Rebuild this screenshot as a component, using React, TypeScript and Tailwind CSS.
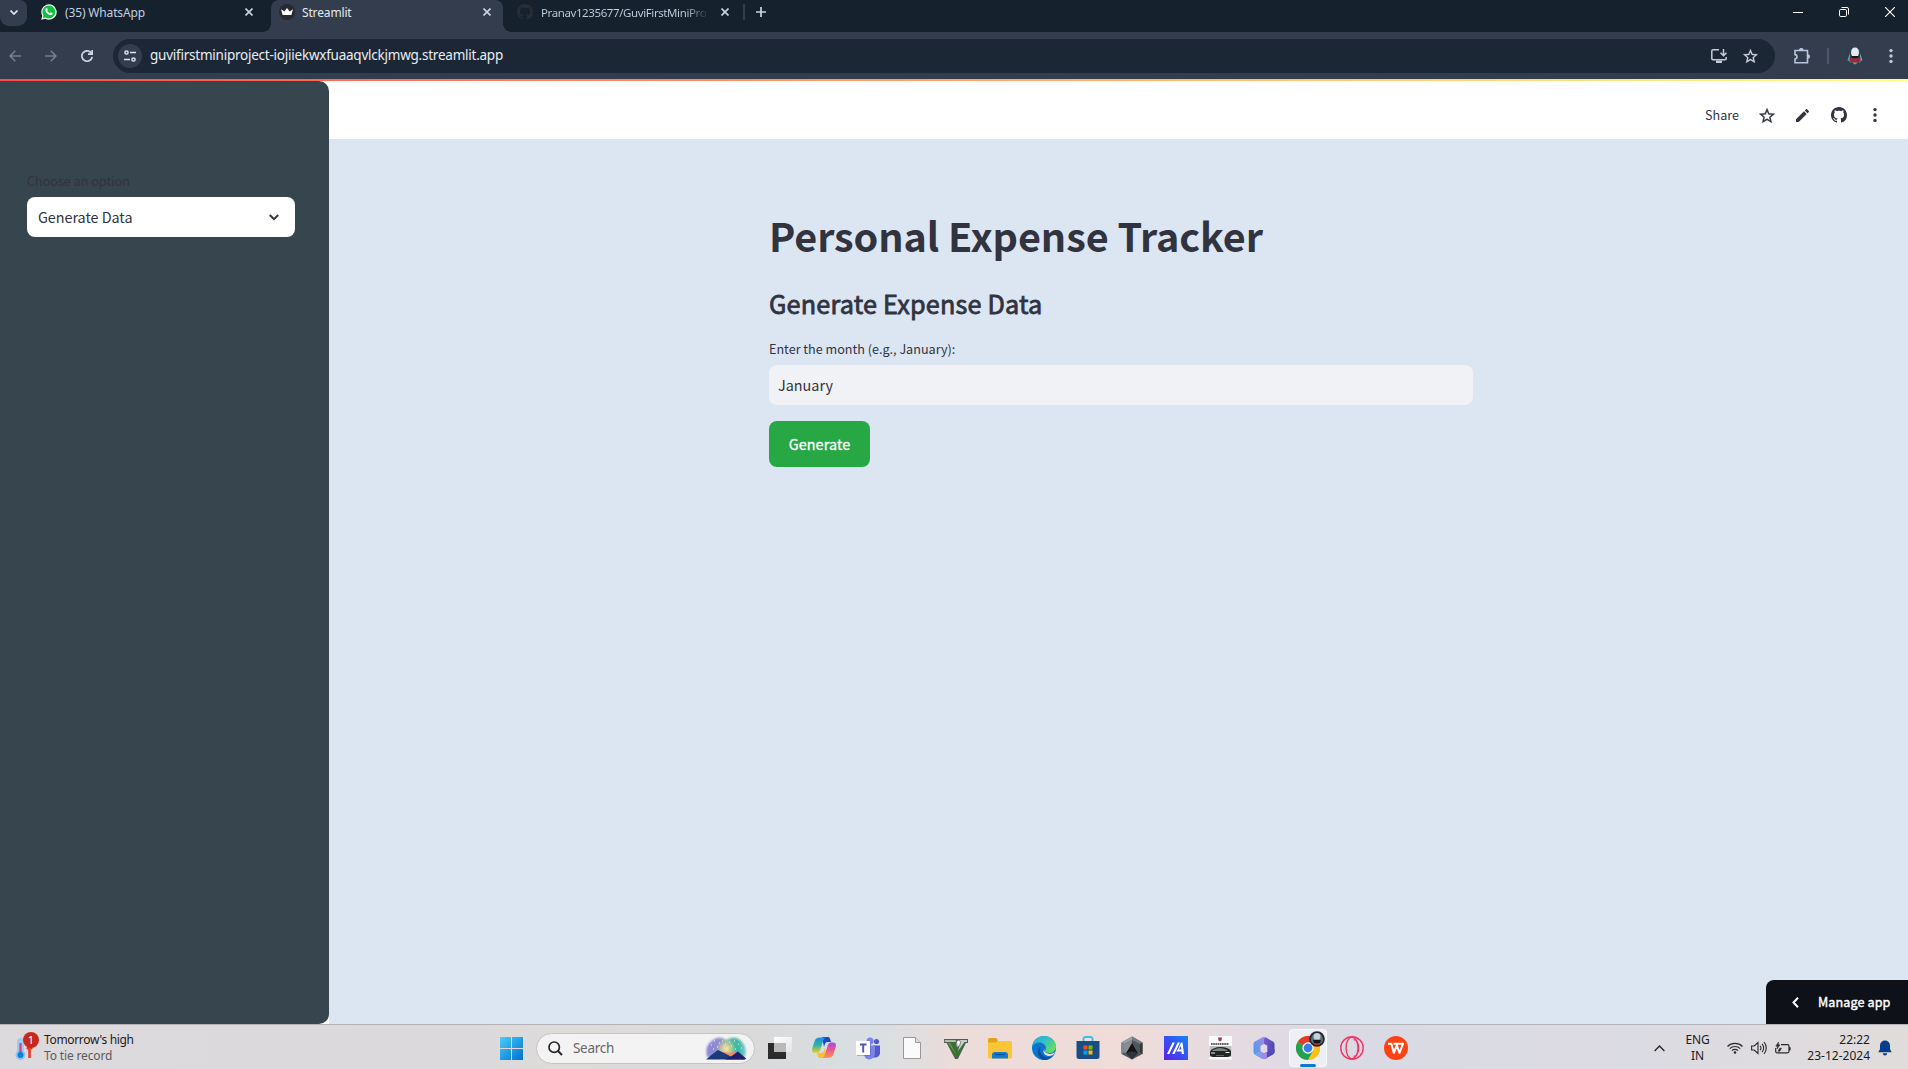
import type { ReactNode } from "react";

const UI = "font-['Noto_Sans',sans-serif]";
const SOURCE = "font-['Noto_Sans_CJK_SC',sans-serif]";

const GITHUB =
  "M8 0C3.58 0 0 3.58 0 8c0 3.54 2.29 6.53 5.47 7.59.4.07.55-.17.55-.38 0-.19-.01-.82-.01-1.49-2.01.37-2.53-.49-2.69-.94-.09-.23-.48-.94-.82-1.13-.28-.15-.68-.52-.01-.53.63-.01 1.08.58 1.23.82.72 1.21 1.87.87 2.33.66.07-.52.28-.87.51-1.07-1.78-.2-3.64-.89-3.64-3.95 0-.87.31-1.59.82-2.15-.08-.2-.36-1.02.08-2.12 0 0 .67-.21 2.2.82.64-.18 1.32-.27 2-.27s1.36.09 2 .27c1.53-1.04 2.2-.82 2.2-.82.44 1.1.16 1.92.08 2.12.51.56.82 1.27.82 2.15 0 3.07-1.87 3.75-3.65 3.95.29.25.54.73.54 1.48 0 1.07-.01 1.93-.01 2.2 0 .21.15.46.55.38A8.01 8.01 0 0 0 16 8c0-4.42-3.58-8-8-8z";
const STAR =
  "M22 9.24l-7.19-.62L12 2 9.19 8.63 2 9.24l5.46 4.73L5.82 21 12 17.27 18.18 21l-1.63-7.03L22 9.24zM12 15.4l-3.76 2.27 1-4.28-3.32-2.88 4.38-.38L12 6.1l1.71 4.04 4.38.38-3.32 2.88 1 4.28L12 15.4z";

function CloseX() {
  return (
    <svg viewBox="0 0 8 8" className="size-2 shrink-0" stroke="#ccd4e0" strokeWidth="1.6">
      <path d="M.5.5l7 7M7.5.5l-7 7" />
    </svg>
  );
}

function Dots({ color }: { color: string }) {
  return (
    <svg viewBox="0 0 4 16" className="h-4 w-1" fill={color}>
      <circle cx="2" cy="2.6" r="1.7" />
      <circle cx="2" cy="8" r="1.7" />
      <circle cx="2" cy="13.4" r="1.7" />
    </svg>
  );
}

function TabStrip() {
  return (
    <div className={`flex h-8 bg-[#16212e] text-[12px] leading-4 text-[#c3cfe0] ${UI}`}>
      <div className="flex h-[26px] w-[27px] items-center justify-center rounded-b-[9px] rounded-tr-[7px] bg-[#333d4d] pb-0.5">
        <svg viewBox="0 0 8 5" className="h-[5px] w-2" fill="none" stroke="#dfe5ee" strokeWidth="1.7">
          <path d="M.5.5L4 4 7.5.5" />
        </svg>
      </div>
      <div className="flex h-6 w-[244px] items-center pl-[14px]">
        <svg viewBox="0 0 16 16" className="size-4 shrink-0">
          <path d="M.2 15.8l1.1-4A7.7 7.7 0 1 1 8 15.7c-1.3 0-2.6-.3-3.7-.9z" fill="#f4fff6" />
          <path d="M1.8 14.2l.7-2.6A6.5 6.5 0 1 1 8 14.5c-1.3 0-2.5-.4-3.5-1z" fill="#12c143" />
          <path d="M5.2 4.3c.4-.4.8-.3 1 .1l.6 1.3c.1.3-.1.6-.6 1.1.8 1.3 1.5 1.9 2.7 2.4.6-.6.8-1 1.2-.8l1.3.7c.4.2.3.8-.1 1.3-1.1 1.1-2.5.7-4-.2C5.8 9.2 4.6 7.6 4.400 6.400c-.2-1 .2-1.700.8-2.100z" fill="#fff" />
        </svg>
        <span className="mt-0.5 ml-2 w-[180px] tracking-[-0.15px]">(35) WhatsApp</span>
        <CloseX />
      </div>
      <div className="relative flex h-8 w-[232px] rounded-t-[8px] bg-[#333d4d]">
        <span className="absolute bottom-0 -left-2 size-2 bg-[radial-gradient(circle_at_0_0,#16212e_7.5px,#333d4d_8px)]" />
        <span className="absolute -right-2 bottom-0 size-2 bg-[radial-gradient(circle_at_100%_0,#16212e_7.5px,#333d4d_8px)]" />
        <div className="flex h-6 items-center pl-2 text-[#e4e9f1]">
          <svg viewBox="0 0 16 16" className="size-4">
            <circle cx="8" cy="8" r="8" fill="#282933" />
            <path d="M2 5.300l3.300 2.300L8 4l2.700 3.600L14 5.300 12.400 11H3.600z" fill="#fff" />
          </svg>
          <span className="mt-0.5 ml-[7px] w-[181px] tracking-[-0.15px]">Streamlit</span>
          <CloseX />
        </div>
      </div>
      <div className="flex h-6 items-center pl-[14px]">
        <svg viewBox="0 0 16 16" className="size-4" fill="#292d36">
          <path d={GITHUB} />
        </svg>
        <span className="mt-0.5 ml-2 w-[172px] bg-[linear-gradient(90deg,#c3cfe0_145px,transparent_168px)] bg-clip-text text-[11.5px] whitespace-nowrap tracking-[-0.4px] text-transparent">
          Pranav1235677/GuviFirstMiniPro
        </span>
        <span className="ml-2 flex">
          <CloseX />
        </span>
        <span className="ml-[14px] h-4 w-0.5 bg-[#333d4d]" />
        <svg viewBox="0 0 10 10" className="ml-[11px] size-[10px]" stroke="#ccd4e0" strokeWidth="1.7">
          <path d="M5 0v10M0 5h10" />
        </svg>
      </div>
      <div className="ml-auto flex h-6 items-center pr-[13px]">
        <span className="mr-9 h-px w-[10px] bg-white" />
        <svg viewBox="0 0 10 10" className="mr-9 size-[10px]" fill="none" stroke="#fff">
          <rect x=".5" y="2.500" width="7" height="7" rx="1.300" />
          <path d="M2.500.5H8A1.500 1.500 0 0 1 9.500 2v5.500" />
        </svg>
        <svg viewBox="0 0 10 10" className="size-[10px]" stroke="#fff" strokeWidth="1.100">
          <path d="M0 0l10 10M10 0L0 10" />
        </svg>
      </div>
    </div>
  );
}

function Toolbar() {
  return (
    <div className={`flex h-[47px] items-center bg-[#333d4d] pl-[9px] ${UI}`}>
      <svg viewBox="0 0 12 12" className="size-3" fill="none" stroke="#757d89" strokeWidth="1.600">
        <path d="M12 6H1.200M6.300.8L1.100 6l5.200 5.200" />
      </svg>
      <svg viewBox="0 0 12 12" className="ml-6 size-3" fill="none" stroke="#757d89" strokeWidth="1.600">
        <path d="M0 6h10.800M5.700.8L10.900 6l-5.200 5.200" />
      </svg>
      <svg viewBox="0 0 12 12" className="ml-6 size-3" fill="none" stroke="#ccd6e4" strokeWidth="1.700">
        <path d="M10.300 3A5.200 5.200 0 1 0 11.200 6.800M11.200 0v4.200H7" />
      </svg>
      <div className="ml-5 flex h-[34px] w-[1662px] items-center rounded-full bg-[#1c2736] pr-[17px] pl-[5px]">
        <span className="flex size-6 items-center justify-center rounded-full bg-[#333d4d]">
          <svg viewBox="0 0 12 12" className="size-3" fill="none" stroke="#dde3ec" strokeWidth="1.500">
            <circle cx="2.500" cy="2.500" r="1.600" />
            <circle cx="9.500" cy="9.500" r="1.600" />
            <path d="M6 2.500h6M0 9.500h6" />
          </svg>
        </span>
        <span className="ml-2 text-[13.5px] tracking-[-0.235px] text-[#e8edf5]">
          guvifirstminiproject-iojiiekwxfuaaqvlckjmwg.streamlit.app
        </span>
        <svg viewBox="0 0 16 16" className="ml-auto size-4" fill="none" stroke="#c5ccd6" strokeWidth="1.500">
          <path d="M8 1.700H2Q.8 1.700.8 3v7.500q0 1.200 1.200 1.200h12q1.200 0 1.200-1.200V9M12.500 1v6.500M9.500 4.800l3 3 3-3" />
          <path d="M5 13.800h6" strokeWidth="2.400" />
        </svg>
        <svg viewBox="2 2 20 19" className="ml-4 h-[14px] w-[15px]" fill="#ccd3dd" stroke="#ccd3dd" strokeWidth=".3">
          <path d={STAR} />
        </svg>
      </div>
      <svg viewBox="0 0 16 16" className="ml-[19px] size-4" fill="none" stroke="#b7c6dc" strokeWidth="1.600">
        <path d="M1 2.500h12.500V14.800H1V11c2.600-.2 2.600-4.200 0-4.400z" />
        <path d="M5.500 2a1.800 1.800 0 0 1 3.600 0zM14 6.800a1.700 1.700 0 0 1 0 3.400z" fill="#b7c6dc" strokeWidth="1" />
      </svg>
      <span className="ml-[17px] h-4 w-0.5 bg-[#4b586b]" />
      <svg viewBox="0 0 20 20" className="ml-4 size-5">
        <circle cx="10" cy="10" r="9" fill="#343b48" />
        <path d="M4 9q0-7 6-7t6 7l2 6-5 4H7l-5-4z" fill="#234753" />
        <path d="M5 7l-2.500 7L6 17l-1-5zM15 7l2.500 7L14 17l1-5z" fill="#58a9b6" />
        <path d="M6 7q0-5.500 4-5.500T14 7l-1 3H7z" fill="#e4eaf2" />
        <path d="M4.500 11.500l3 1h5l3-1v4l-3 1h-5l-3-1z" fill="#b3202f" />
        <path d="M6 10h8l-1.500 2h-5z" fill="#14171d" />
        <path d="M7 16.500h6l-3 2z" fill="#8e979f" />
      </svg>
      <span className="ml-6">
        <Dots color="#bfcadb" />
      </span>
    </div>
  );
}

function AppHeader() {
  return (
    <header className={`flex h-[58px] items-center justify-end bg-white pt-[10px] pr-[31px] ${SOURCE}`}>
      <span className="mr-5 text-[12.6px] text-[#31333f]">Share</span>
      <svg viewBox="2 2 20 19" className="mr-[21px] h-[15px] w-4" fill="#31333f" stroke="#31333f" strokeWidth=".3">
        <path d={STAR} />
      </svg>
      <svg viewBox="3 3 18 18" className="mr-[22px] size-[13px]" fill="#31333f">
        <path d="M3 17.250V21h3.750L17.810 9.940l-3.750-3.750L3 17.250zM20.710 7.040a1 1 0 0 0 0-1.410l-2.340-2.340a1 1 0 0 0-1.410 0l-1.830 1.830 3.750 3.750 1.830-1.830z" />
      </svg>
      <svg viewBox="0 0 16 16" className="mr-[26px] size-4" fill="#31333f">
        <path d={GITHUB} />
      </svg>
      <Dots color="#31333f" />
    </header>
  );
}

function Page() {
  return (
    <div className={`flex h-[943px] bg-white text-[#31333f] ${SOURCE}`}>
      <aside className="w-[329px] rounded-r-[10px] bg-[#37454f] pt-[91px] pl-[27px]">
        <p className="h-[25px] text-[12.6px] leading-[18px]">Choose an option</p>
        <div className="flex h-10 w-[268px] items-center justify-between rounded-lg bg-white pr-4 pl-[11px] text-[14.4px] tracking-[-0.05px]">
          Generate Data
          <svg viewBox="0 0 10 7" className="h-[7px] w-[10px]" fill="none" stroke="#31333f" strokeWidth="2">
            <path d="M.8 1L5 5.200 9.200 1" />
          </svg>
        </div>
      </aside>
      <div className="flex flex-1 flex-col">
        <AppHeader />
        <main className="flex flex-1 flex-col bg-[#dce6f2]">
          <div className="ml-[440px] w-[704px] pt-[69px]">
            <h1 className="h-[72px] text-[39.6px] leading-[53px] font-bold tracking-[-0.1px] whitespace-nowrap">
              Personal Expense Tracker
            </h1>
            <h2 className="h-[59px] text-[25.2px] leading-[46px] tracking-[0.2px] [-webkit-text-stroke:0.8px_#31333f]">
              Generate Expense Data
            </h2>
            <p className="h-[26px] text-[12.6px] leading-5">Enter the month (e.g., January):</p>
            <div className="flex h-10 items-center rounded-lg bg-[#f0f2f6] pl-[9px] text-[14.4px]">January</div>
            <button className="mt-4 h-[46px] w-[101px] rounded-lg bg-[#28a745] text-[14.4px] tracking-[0.1px] text-white [-webkit-text-stroke:0.3px_white]">
              Generate
            </button>
          </div>
          <div className="mt-auto ml-auto flex h-11 w-[142px] items-center rounded-tl-lg bg-[#0e1117] pl-[26px] text-[12.6px] tracking-[0.1px] text-white [-webkit-text-stroke:0.4px_white]">
            <svg viewBox="0 0 7 11" className="mr-[19px] h-[11px] w-[7px]" fill="none" stroke="#fff" strokeWidth="2">
              <path d="M6 .8L1.500 5.500 6 10.200" />
            </svg>
            Manage app
          </div>
        </main>
      </div>
    </div>
  );
}

function Slot({ children }: { children: ReactNode }) {
  return (
    <div className="flex w-11 justify-center">
      <svg viewBox="0 0 24 24" className="size-6">
        {children}
      </svg>
    </div>
  );
}

function TaskIcons() {
  return (
    <>
      <Slot>
        <defs>
          <linearGradient id="cpA" x1="0" y1="0" x2="0" y2="1">
            <stop offset="0" stopColor="#1d8bea" />
            <stop offset=".5" stopColor="#2fb6a0" />
            <stop offset="1" stopColor="#efcf2c" />
          </linearGradient>
          <linearGradient id="cpB" x1="0" y1="0" x2="0" y2="1">
            <stop offset="0" stopColor="#a14fe0" />
            <stop offset=".5" stopColor="#f0588c" />
            <stop offset="1" stopColor="#fb9a4b" />
          </linearGradient>
          <linearGradient id="tv" x1="0" y1="0" x2="1" y2="1">
            <stop offset="0" stopColor="#fff" />
            <stop offset="1" stopColor="#e4e4e4" />
          </linearGradient>
          <linearGradient id="edge" x1="0" y1="0" x2="1" y2=".6">
            <stop offset="0" stopColor="#27a9e0" />
            <stop offset=".55" stopColor="#35c1c4" />
            <stop offset="1" stopColor="#69dc5b" />
          </linearGradient>
          <linearGradient id="asus" x1="0" y1="1" x2="1" y2="0">
            <stop offset="0" stopColor="#5a20e8" />
            <stop offset="1" stopColor="#1583f8" />
          </linearGradient>
          <linearGradient id="mA" x1="0" y1="1" x2="1" y2="0">
            <stop offset="0" stopColor="#4a9be8" />
            <stop offset="1" stopColor="#a98ae8" />
          </linearGradient>
          <linearGradient id="mB" x1="0" y1="0" x2="1" y2="1">
            <stop offset="0" stopColor="#7f5fd0" />
            <stop offset="1" stopColor="#3c3fae" />
          </linearGradient>
          <linearGradient id="mC" x1="0" y1="0" x2="1" y2="0">
            <stop offset="0" stopColor="#5fb4f0" />
            <stop offset="1" stopColor="#b07fe6" />
          </linearGradient>
        </defs>
        <path d="M0 7h18v16H0z" fill="#2c2c2c" />
        <path d="M6 1h18v15H6z" fill="url(#tv)" />
        <path d="M6 7h12v9H6z" fill="#b9b9b9" />
      </Slot>
      <Slot>
        <path d="M10 1h6c2 0 2 2 3 5h-3c-3 0-3 2-4 5z" fill="#1f45cf" />
        <path d="M14 22H8c-2 0-2-2-3-5h4c3 0 3-3 4-5z" fill="#f6c231" />
        <path d="M8 1.500h6c-3 1-3 5-5 10-1 4-2 5.500-4 5.500H3c-3 0-3.500-2-2.500-5.500l2-6C3.500 2.500 5 1.500 8 1.500z" fill="url(#cpA)" />
        <path d="M16 22h-6c3-1 3-5 5-10 1-4 2-5.500 4-5.500h2c3 0 3.500 2 2.500 5.500l-2 6c-1 3-2.500 4-5.500 4z" fill="url(#cpB)" />
      </Slot>
      <Slot>
        <circle cx="14" cy="5" r="3.500" fill="#7b83eb" />
        <circle cx="20.500" cy="5.500" r="2.600" fill="#5059c9" />
        <path d="M17 9.500h7v8q-1 4-5 4h-2z" fill="#5059c9" />
        <path d="M8 9.500h11v7c0 9-11 9-11 1z" fill="#7b83eb" />
        <path d="M0 5h14v14H0z" fill="#fff" />
        <path d="M4 8.500h6.500M7.200 8.500v8" stroke="#4b53bc" strokeWidth="1.900" />
        <path d="M14 6v13H1v1h14V6z" fill="#4a50aa" opacity=".35" />
      </Slot>
      <Slot>
        <path d="M3.500 1.500h12l5 5v16h-17z" fill="#fafafa" stroke="#989898" />
        <path d="M15.500 1.500v5h5" fill="#ddd" stroke="#989898" />
      </Slot>
      <Slot>
        <path d="M.5 3.500h12v3h-1.500l2 7 3-7H14l-.5-3h10v3h-2L13.500 22.500h-2L3 6.500H.5z" fill="#34772c" stroke="#555b55" strokeWidth="1.200" />
        <path d="M.8 4h11v2h-11z" fill="#b5bab2" />
        <path d="M4 7h2l6.500 12z" fill="#6c9a58" />
        <path d="M14 4h9v2h-2.500L14 15l2-7.500z" fill="#c9ccc6" />
        <path d="M12.500 6.500c0-3 4-3 4 0s-3 4-3 6z" fill="#fff" stroke="#555" strokeWidth=".7" />
      </Slot>
      <Slot>
        <path d="M0 4q0-2 2-2h6l2 3h12q2 0 2 2v14q0 1.500-1.500 1.500h-21Q0 22.500 0 21z" fill="#fcc535" />
        <path d="M0 4q0-2 2-2h6l2 2-2 2.500H0z" fill="#e3a018" />
        <path d="M4 22.500V19q0-3 3-3h10q3 0 3 3v3.500z" fill="#147bd1" />
        <path d="M7 18.500h10" stroke="#0c56a0" strokeWidth="1.500" />
      </Slot>
      <Slot>
        <circle cx="12" cy="12" r="12" fill="#0c74ce" />
        <path d="M0 11C1 4 6 0 12 0c7 0 12 5 12 10.500 0 4-3 6.500-6.500 6.500-3 0-4.500-1-4.500-2 0-.8 1-1.200 1-3C14 9 11 6.500 7.500 6.500 4 6.500 1 8.500 0 11z" fill="url(#edge)" />
        <path d="M9 10c-3 6 2 11.500 7 11.500 2.500 0 4.500-1 6.500-3C20 22 16.500 24 12.500 24 6 24 3.500 13 9 10z" fill="#0f4f9c" />
        <path d="M13.500 12c-1.500.5-2 3 0 4.500 2.500 2 6.500 2 9.500-.5-1.500 3-3.500 4-6 4-5 0-7.500-5.500-3.500-8z" fill="#e9e3e4" />
      </Slot>
      <Slot>
        <path d="M7.500 6V3q0-2 2-2h5q2 0 2 2v3" fill="none" stroke="#35c0ef" strokeWidth="1.800" />
        <path d="M.5 5h23v15.500q0 2.500-2.500 2.500H3Q.5 23 .5 20.500z" fill="#194d83" />
        <path d="M7.500 9.500h4v4h-4z" fill="#f25022" />
        <path d="M12.500 9.500h4v4h-4z" fill="#7fba00" />
        <path d="M7.500 14.500h4v4h-4z" fill="#00a4ef" />
        <path d="M12.500 14.500h4v4h-4z" fill="#ffb900" />
      </Slot>
      <Slot>
        <path d="M12 .5l10.500 6v11.500L12 23.500 1.500 18V6.500z" fill="#50565c" />
        <path d="M12 .5L1.500 6.500 4 8l8-4z" fill="#9aa1a7" />
        <path d="M12 .5l10.500 6L20 8l-8-4z" fill="#757c83" />
        <path d="M1.500 6.500L4 8v8.500L1.500 18z" fill="#7e858b" />
        <path d="M22.500 6.500L20 8v8.500l2.500 1.500z" fill="#33383d" />
        <path d="M4 8l8-4v4L6 17l-2-.5z" fill="#868d94" />
        <path d="M12 7l6 10.500-6-2-6 2z" fill="#121518" />
        <path d="M6 17.500l6-2 6 2-6 6z" fill="#30353a" />
      </Slot>
      <Slot>
        <path d="M0 0h24v24H0z" fill="url(#asus)" />
        <path d="M3 18L8.500 6.500h2.300L5.300 18zM8.200 18l5.500-11.500H16L10.500 18zM17 6.500h1.500L20 18h-2.200l-.3-2.500h-5l1-2h3.800l-.4-3.500-2 3.500h-1z" fill="#fff" />
      </Slot>
      <Slot>
        <path d="M1 0h23v23.500H1z" fill="#f8f9fa" />
        <path d="M10 1.500h4l-.5 3-1.500 1-1.500-1z" fill="#a5375e" />
        <path d="M3 8h18" stroke="#333" strokeWidth="1.700" strokeDasharray="1.700 .5" />
        <path d="M1.500 10h22v11h-22z" fill="#b9bdbc" />
        <path d="M2 15.500Q5 11 12.500 11T23 15v4.500l-3 1.500H4.500L2 19.500z" fill="#232726" />
        <path d="M6 13.500q6-3 12 0l2 1.500H4z" fill="#7f8684" />
        <path d="M3 17h4M17.500 16.500h4" stroke="#e9eceb" />
        <path d="M8 19.500h8" stroke="#5f6664" />
      </Slot>
      <Slot>
        <path d="M10.500 1.300q1.500-.8 3 0L15 2.200v7L12 7.800 8.500 10v5.500L2.800 18.600Q1.500 17.500 1.500 16V8Q1.500 6.500 3 5.600z" fill="url(#mA)" />
        <path d="M13.500 1.300L21 5.600q1.500 1 1.500 2.400v9L15.500 14V9.800L12 7.800V3z" fill="url(#mB)" />
        <path d="M22.500 13v3q0 1.500-1.500 2.500l-7.500 4.200q-1.500.8-3 0L3 18.500l5.500-3 3.500 2 3.500-2V9.500z" fill="url(#mB)" />
        <path d="M2 17.500l6.500-2 3.500 2 3-1.500v6l-1.500.8q-1.500.8-3 0L3 18.500z" fill="url(#mC)" />
      </Slot>
      <div className="flex w-11 justify-center">
        <div className="relative flex h-[38px] w-[38px] items-center justify-center rounded-[4px] border border-white/60 bg-[#eeeff5]">
          <svg viewBox="0 0 24 24" className="size-6">
            <circle cx="12" cy="12" r="12" fill="#fbc116" />
            <path d="M12 12L1.600 6A12 12 0 0 1 22.400 6z" fill="#e33b2e" />
            <path d="M12 12L1.600 6A12 12 0 0 0 12 24l5.200-9z" fill="#22a150" />
            <path d="M12 6.500h10.700A12 12 0 0 1 12 24l5-9z" fill="#fbc116" />
            <circle cx="12" cy="12" r="5.700" fill="#fff" />
            <circle cx="12" cy="12" r="4.400" fill="#3b7ded" />
          </svg>
          <svg viewBox="0 0 16 16" className="absolute top-[1px] right-[1px] size-4">
            <circle cx="8" cy="8" r="7.800" fill="#20272e" />
            <path d="M2 10q0-8 6-8t6 8l-2 3-2-3H6l-2 3z" fill="#52707f" />
            <path d="M4.500 6q0-4 3.500-4t3.500 4l-1 2.500h-5z" fill="#c9d1d8" />
            <path d="M4 9h8l-1 3H5z" fill="#161418" />
            <path d="M4 11.500l4 1 4-1-1.500 2.500h-5z" fill="#a3343c" />
          </svg>
          <span className="absolute -bottom-px h-[3px] w-4 rounded-full bg-[#0f78d4]" />
        </div>
      </div>
      <Slot>
        <g fill="none" stroke="#f5325f">
          <circle cx="12" cy="12" r="11.200" strokeWidth="1.400" />
          <ellipse cx="12" cy="12" rx="6" ry="10.800" strokeWidth="1.300" />
          <path d="M13.500 3.500c7 1 7 16 0 17" strokeWidth="1.200" />
        </g>
      </Slot>
      <Slot>
        <circle cx="12" cy="12" r="12" fill="#fc4213" />
        <path
          d="M4 7.800h3.300l2.500 9 3-7.500 2.700 7.500 3.500-9H9.500"
          fill="none"
          stroke="#fff"
          strokeWidth="2"
          strokeLinejoin="round"
        />
      </Slot>
    </>
  );
}

function Taskbar() {
  return (
    <div
      className={`flex h-[45px] items-center border-t border-[#b3b3b7] bg-[linear-gradient(90deg,#dcdadc_0px,#dbd9db_480px,#dedbda_560px,#dadadb_760px,#d8dfe3_870px,#ecdcda_960px,#f0dcd9_1120px,#e3dbe2_1250px,#d9dae4_1340px,#dcdbe2_1660px,#e1dcdb_1908px)] pt-[3px] pb-px text-[12px] leading-4 text-[#1c1c1c] ${UI}`}
    >
      <div className="flex w-[500px] items-center pl-[15px]">
        <div className="relative mt-[-4px] h-7 w-[29px]">
          <svg viewBox="0 0 18 24" className="absolute top-1.5 left-0 h-6 w-[18px]">
            <rect x="2" y="0" width="7" height="20" rx="3.500" fill="#9ccbf5" />
            <circle cx="5.500" cy="17" r="5" fill="#8fc4f3" />
            <path d="M5.500 5v12" stroke="#d84a83" strokeWidth="2.500" />
            <circle cx="5.500" cy="17" r="3" fill="#137fd0" />
            <path d="M14.500 8v12M12 11l2.500-3 2.500 3" stroke="#f3331f" strokeWidth="2.500" fill="none" />
          </svg>
          <span className="absolute top-0 left-2 flex size-4 items-center justify-center rounded-full bg-[#c42b1c] text-[11px] text-white">
            1
          </span>
        </div>
        <div className="mt-[-1px]">
          <p className="tracking-[-0.34px]">Tomorrow's high</p>
          <p className="tracking-[-0.15px] text-[#5b5b5d]">To tie record</p>
        </div>
      </div>
      <svg viewBox="0 0 23 23" className="size-[23px]">
        <defs>
          <linearGradient id="win" x1="0" y1="0" x2="1" y2="1">
            <stop offset="0" stopColor="#4accfa" />
            <stop offset="1" stopColor="#0070cf" />
          </linearGradient>
        </defs>
        <path d="M0 0h11v11H0zM12 0h11v11H12zM0 12h11v11H0zM12 12h11v11H12z" fill="url(#win)" />
      </svg>
      <div className="ml-[13px] flex h-[31px] w-[219px] items-center rounded-full border border-[#c6c4c4] bg-[#f4f3f3] pr-[7px] pl-[11px] text-[13.5px] text-[#666]">
        <svg viewBox="0 0 15 15" className="size-[15px]" fill="none" stroke="#252525" strokeWidth="1.700">
          <circle cx="6.200" cy="6.200" r="5.200" />
          <path d="M10 10l4 4" strokeWidth="2" />
        </svg>
        <span className="ml-[10px] tracking-[-0.3px]">Search</span>
        <svg viewBox="0 0 42 24" className="ml-auto h-6 w-[42px]">
          <defs>
            <linearGradient id="sky" x1="0" y1="0" x2="1" y2="0">
              <stop offset="0" stopColor="#8c83db" />
              <stop offset=".35" stopColor="#8e90cc" />
              <stop offset=".55" stopColor="#74b7a8" />
              <stop offset=".8" stopColor="#36b9a5" />
              <stop offset="1" stopColor="#79c9cf" />
            </linearGradient>
            <radialGradient id="glow" cx=".5" cy=".5" r=".5">
              <stop offset="0" stopColor="#ffe28c" />
              <stop offset="1" stopColor="#ffe28c" stopOpacity="0" />
            </radialGradient>
            <filter id="soft">
              <feGaussianBlur stdDeviation="1" />
            </filter>
          </defs>
          <path d="M2 21Q-1 9 8 4q6-5 13 0 8-5 14 0 8 6 5 17z" fill="url(#sky)" filter="url(#soft)" />
          <circle cx="21" cy="13" r="10" fill="url(#glow)" />
          <path d="M12 20l5-4 8 1 4-2 3 4z" fill="#f28a63" />
          <path d="M1 23.500l6-5 6-4.500 8 4 5 2.500 6-4 9 6-2 1z" fill="#1b3a7c" />
          <path d="M20 23.500l7-3.500 6-4.500 8 7-1 1z" fill="#211a6e" />
          <path d="M6 9h1M9 5h1M14 7h1M17 5h1M20 8h1M24 6h1M29 5h1M26 10h1M33 8h1M12 11h1M22 12h1M36 12h1M8 13h1M30 13h1M19 10h1" stroke="#fff3cb" strokeWidth="1.200" />
        </svg>
      </div>
      <div className="ml-[3px] flex h-[38px] items-center">
        <TaskIcons />
      </div>
      <div className="ml-auto flex items-center pr-4">
        <svg viewBox="0 0 11 7" className="h-[7px] w-[11px]" fill="none" stroke="#2a2a2a" strokeWidth="1.400">
          <path d="M.6 6L5.500 1l4.900 5" />
        </svg>
        <div className="ml-[18px] w-[29px] text-center tracking-[-0.2px]">
          <p>ENG</p>
          <p>IN</p>
        </div>
        <svg viewBox="0 0 16 12" className="ml-[15px] h-3 w-4" fill="none" stroke="#2a2a2a" strokeWidth="1.100">
          <path d="M.5 4.500a10.500 10.500 0 0 1 15 0M2.700 6.700a7.500 7.500 0 0 1 10.600 0M4.900 8.700a4.300 4.300 0 0 1 6.200 0" />
          <circle cx="8" cy="10.500" r="1.300" fill="#2a2a2a" stroke="none" />
        </svg>
        <svg viewBox="0 0 16 14" className="ml-2 h-[14px] w-4" fill="none" stroke="#2a2a2a" strokeWidth="1.100">
          <path d="M.6 5h2.600L7 1.500v11L3.200 9H.6zM9 4.800a3 3 0 0 1 0 4.400M11 2.900a6 6 0 0 1 0 8.200M13 1.200a8.600 8.600 0 0 1 0 11.600" />
        </svg>
        <svg viewBox="0 0 16 13" className="ml-2 h-[13px] w-4" fill="none" stroke="#2a2a2a" strokeWidth="1.200">
          <path d="M6 2.700h6.500q1.500 0 1.500 1.500v5.100q0 1.500-1.500 1.500H2.200Q.7 10.800.7 9.300V6M15 5.200v3.100" />
          <path d="M3.500 0L.8 4.200h1.700L2 7l3-4.200H3.300zM3 9.300l1.500-3h2L4.800 9.300z" fill="#2a2a2a" strokeWidth=".5" />
        </svg>
        <div className="ml-[7px] w-[72px] text-right">
          <p>22:22</p>
          <p className="whitespace-nowrap">23-12-2024</p>
        </div>
        <svg viewBox="0 0 14 16" className="ml-2 h-4 w-[14px]" fill="#063e8d">
          <path d="M7 .5a5 5 0 0 1 5 5V9l1.700 3.300H.3L2 9V5.500a5 5 0 0 1 5-5zM4.800 13.300h4.400a2.200 2.200 0 0 1-4.400 0z" />
        </svg>
      </div>
    </div>
  );
}

export default function App() {
  return (
    <div className="flex h-[1069px] w-[1908px] flex-col overflow-hidden">
      <TabStrip />
      <Toolbar />
      <div className="h-0.5 bg-[linear-gradient(90deg,#ff4b4b,#fffd80)]" />
      <Page />
      <Taskbar />
    </div>
  );
}
